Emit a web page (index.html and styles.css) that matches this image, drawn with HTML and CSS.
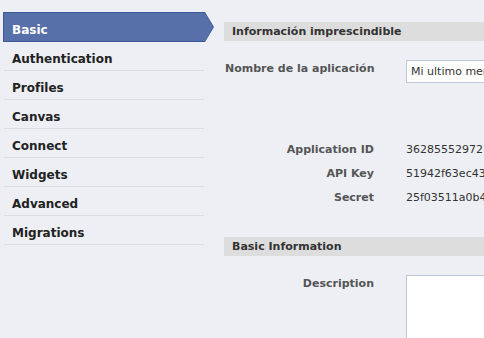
FILE: index.html
```html
<!DOCTYPE html>
<html lang="es">
<head>
  <meta charset="UTF-8">
  <title>Edit App</title>
  <link rel="stylesheet" href="styles.css">
</head>
<body>
  <div class="page">
    <ul class="menu">
      <li class="menu-item active"><span>Basic</span></li>
      <li class="menu-item">Authentication</li>
      <li class="menu-item">Profiles</li>
      <li class="menu-item">Canvas</li>
      <li class="menu-item">Connect</li>
      <li class="menu-item">Widgets</li>
      <li class="menu-item">Advanced</li>
      <li class="menu-item">Migrations</li>
    </ul>
    <div class="content">
      <h3 class="section-title">Información imprescindible</h3>
      <div class="row row-name">
        <label class="name-label">Nombre de la aplicación</label>
        <input class="text-input" type="text" value="Mi ultimo mensaje">
      </div>
      <div class="keys">
        <div class="row">
          <span class="label">Application ID</span>
          <span class="value">362855529721234</span>
        </div>
        <div class="row">
          <span class="label">API Key</span>
          <span class="value">51942f63ec43a1b2c3d4</span>
        </div>
        <div class="row">
          <span class="label">Secret</span>
          <span class="value">25f03511a0b4c5d6e7f8</span>
        </div>
      </div>
      <h3 class="section-title">Basic Information</h3>
      <div class="row row-desc">
        <span class="label">Description</span>
        <textarea class="text-area"></textarea>
      </div>
    </div>
  </div>
</body>
</html>
```

FILE: styles.css
```css
* {
  margin: 0;
  padding: 0;
  box-sizing: border-box;
}
body {
  background-color: #edeff4;
  font-family: "DejaVu Sans", Verdana, sans-serif;
  font-size: 11px;
  color: #333;
  overflow: hidden;
}
.page {
  display: flex;
  width: 484px;
  height: 338px;
  overflow: hidden;
}
.menu {
  list-style: none;
  width: 214px;
  padding: 12px 0 0 3px;
  flex-shrink: 0;
}
.menu-item {
  width: 200px;
  height: 29px;
  margin-left: 1px;
  padding: 3px 0 0 8px;
  line-height: 28px;
  border-bottom: 1px solid #d8dce5;
  font-weight: bold;
  font-size: 12px;
  color: #222;
}
.menu-item.active {
  width: 211px;
  height: 30px;
  margin-left: 0;
  padding: 1px;
  border: none;
  background-color: #3b5998;
  clip-path: polygon(0 0, 202px 0, 211px 15px, 202px 30px, 0 30px);
}
.menu-item.active span {
  display: block;
  height: 28px;
  padding: 3px 0 0 8px;
  line-height: 28px;
  color: #fff;
  background-color: #5770a9;
  clip-path: polygon(0 0, 201px 0, 209px 14px, 201px 28px, 0 28px);
}
.content {
  flex: 1;
  min-width: 0;
  padding: 22px 0 0 10px;
}
.section-title {
  height: 19px;
  line-height: 20px;
  padding-left: 8px;
  background-color: #dddddd;
  font-size: 11px;
  color: #333;
}
.row {
  display: flex;
  align-items: center;
}
.row-name {
  margin-top: 19px;
  align-items: flex-start;
}
.name-label {
  width: 182px;
  flex-shrink: 0;
  white-space: nowrap;
  padding: 0 0 0 1px;
  margin-top: 2px;
  font-weight: bold;
  color: #555;
}
.text-input {
  width: 120px;
  height: 23px;
  flex-shrink: 0;
  padding: 0 4px;
  border: 1px solid #bdc7d8;
  background: #fff;
  font-family: "DejaVu Sans", Verdana, sans-serif;
  font-size: 11px;
  color: #333;
  outline: none;
}
.keys {
  margin-top: 54px;
  margin-bottom: 28px;
}
.keys .row {
  height: 24px;
}
.label {
  width: 150px;
  text-align: right;
  font-weight: bold;
  color: #555;
  flex-shrink: 0;
}
.value {
  margin-left: 32px;
  white-space: nowrap;
}
.row-desc {
  margin-top: 19px;
  align-items: flex-start;
}
.row-desc .label {
  margin-top: 2px;
}
.text-area {
  margin-left: 32px;
  width: 100px;
  height: 80px;
  flex-shrink: 0;
  border: 1px solid #bdc7d8;
  background: #fff;
  resize: none;
}
```
